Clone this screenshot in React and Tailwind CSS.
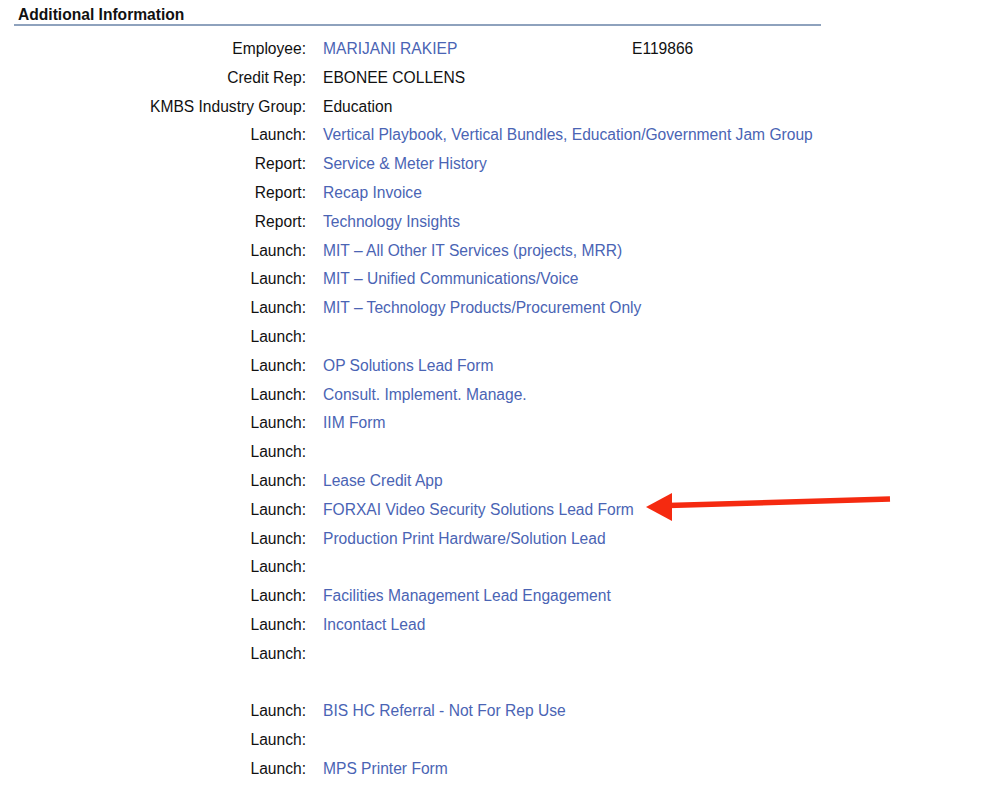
const rows = [
  { label: "Employee:", value: "MARIJANI RAKIEP", link: true, extra: "E119866" },
  { label: "Credit Rep:", value: "EBONEE COLLENS" },
  { label: "KMBS Industry Group:", value: "Education" },
  { label: "Launch:", value: "Vertical Playbook, Vertical Bundles, Education/Government Jam Group", link: true },
  { label: "Report:", value: "Service & Meter History", link: true },
  { label: "Report:", value: "Recap Invoice", link: true },
  { label: "Report:", value: "Technology Insights", link: true },
  { label: "Launch:", value: "MIT \u2013 All Other IT Services (projects, MRR)", link: true },
  { label: "Launch:", value: "MIT \u2013 Unified Communications/Voice", link: true },
  { label: "Launch:", value: "MIT \u2013 Technology Products/Procurement Only", link: true },
  { label: "Launch:", value: "" },
  { label: "Launch:", value: "OP Solutions Lead Form", link: true },
  { label: "Launch:", value: "Consult. Implement. Manage.", link: true },
  { label: "Launch:", value: "IIM Form", link: true },
  { label: "Launch:", value: "" },
  { label: "Launch:", value: "Lease Credit App", link: true },
  { label: "Launch:", value: "FORXAI Video Security Solutions Lead Form", link: true },
  { label: "Launch:", value: "Production Print Hardware/Solution Lead", link: true },
  { label: "Launch:", value: "" },
  { label: "Launch:", value: "Facilities Management Lead Engagement", link: true },
  { label: "Launch:", value: "Incontact Lead", link: true },
  { label: "Launch:", value: "" },
  { label: "", value: "" },
  { label: "Launch:", value: "BIS HC Referral - Not For Rep Use", link: true },
  { label: "Launch:", value: "" },
  { label: "Launch:", value: "MPS Printer Form", link: true },
];

export default function App() {
  return (
    <div className="relative w-[982px] h-[787px] bg-white overflow-hidden text-[15.6px] text-[#111] font-['Liberation_Sans',Arial,sans-serif]">
      <div className="ml-[14px] mt-[6px] w-[807px] border-b-2 border-[#8ea2bd] pl-1 font-bold leading-[18px]">
        Additional Information
      </div>
      <div className="mt-[8.4px] grid grid-cols-[306px_1fr] gap-x-[17px]">
        {rows.map((r, i) => (
          <div key={i} className="contents">
            <div className="h-[28.8px] flex items-center justify-end">{r.label}</div>
            <div className="h-[28.8px] flex items-center">
              <span className={r.extra ? "w-[309px]" : ""}>
                {r.link ? (
                  <a className="text-[#4a64b4] cursor-pointer">{r.value}</a>
                ) : (
                  r.value
                )}
              </span>
              {r.extra && <span>{r.extra}</span>}
            </div>
          </div>
        ))}
      </div>
      <svg className="absolute left-[640px] top-[486px]" width="260" height="40" viewBox="0 0 260 40">
        <line x1="28" y1="19.5" x2="250" y2="13" stroke="#f52a10" strokeWidth="5.5" />
        <polygon points="6,21 32,7 32,35" fill="#f52a10" />
      </svg>
    </div>
  );
}
